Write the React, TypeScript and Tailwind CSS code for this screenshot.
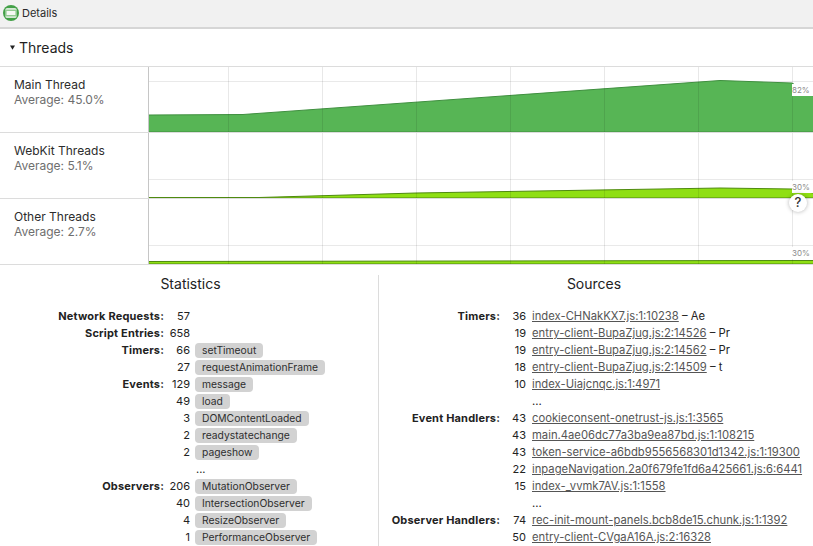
const font = { fontFamily: "Inter, 'Noto Sans', sans-serif" };

const gridX = [79, 173, 267, 361, 455, 549, 643];

function Chart({
  points,
  fill,
  stroke,
  lineY,
  label,
  labelTop,
}: {
  points: string;
  fill: string;
  stroke: string;
  lineY: number;
  label: string;
  labelTop: string;
}) {
  return (
    <div className="relative h-full flex-1 border-l border-[#c6c6c6]">
      <svg width="664" height="65" viewBox="0 0 664 65" className="block">
        <line x1="0" x2="664" y1={lineY} y2={lineY} stroke="#e9e9e9" />
        <polygon points={`0,65 ${points} 664,65`} fill={fill} />
        <polyline points={points} fill="none" stroke={stroke} strokeWidth="1" />
        <line x1="0" x2="664" y1="64.5" y2="64.5" stroke={stroke} strokeOpacity="0.5" />
        {gridX.map((x) => (
          <line key={x} x1={x + 0.5} x2={x + 0.5} y1="0" y2="65" stroke="#000" strokeOpacity="0.09" />
        ))}
      </svg>
      <div className={`absolute right-0 ${labelTop} h-[12px] w-[21px] bg-white text-[8px] leading-[12px] text-[#8a8a8a]`}>
        {label}
      </div>
    </div>
  );
}

function ThreadRow({
  name,
  avg,
  ...chart
}: {
  name: string;
  avg: string;
  points: string;
  fill: string;
  stroke: string;
  lineY: number;
  label: string;
  labelTop: string;
}) {
  return (
    <div className="flex h-[66px] border-b border-[#dcdcdc]">
      <div className="w-[148px] pl-[14px] pt-[10px] text-[12px] leading-[15px]">
        <div className="text-[#2c2c2c]">{name}</div>
        <div className="text-[#6e6e6e]">{avg}</div>
      </div>
      <Chart {...chart} />
    </div>
  );
}

function Chip({ children }: { children: string }) {
  return (
    <span className="inline-block h-[15px] rounded-[4px] bg-[#d2d2d2] px-[7px] text-[10.3px] leading-[15px] text-[#2e2e2e]">
      {children}
    </span>
  );
}

const stats: [string, string, string][] = [
  ["Network Requests:", "57", ""],
  ["Script Entries:", "658", ""],
  ["Timers:", "66", "setTimeout"],
  ["", "27", "requestAnimationFrame"],
  ["Events:", "129", "message"],
  ["", "49", "load"],
  ["", "3", "DOMContentLoaded"],
  ["", "2", "readystatechange"],
  ["", "2", "pageshow"],
  ["", "", "..."],
  ["Observers:", "206", "MutationObserver"],
  ["", "40", "IntersectionObserver"],
  ["", "4", "ResizeObserver"],
  ["", "1", "PerformanceObserver"],
];

const sources: [string, string, string, string][] = [
  ["Timers:", "36", "index-CHNakKX7.js:1:10238", "Ae"],
  ["", "19", "entry-client-BupaZjug.js:2:14526", "Pr"],
  ["", "19", "entry-client-BupaZjug.js:2:14562", "Pr"],
  ["", "18", "entry-client-BupaZjug.js:2:14509", "t"],
  ["", "10", "index-Uiajcnqc.js:1:4971", ""],
  ["", "", "...", ""],
  ["Event Handlers:", "43", "cookieconsent-onetrust-js.js:1:3565", ""],
  ["", "43", "main.4ae06dc77a3ba9ea87bd.js:1:108215", ""],
  ["", "43", "token-service-a6bdb9556568301d1342.js:1:19300", ""],
  ["", "22", "inpageNavigation.2a0f679fe1fd6a425661.js:6:6441", ""],
  ["", "15", "index-_vvmk7AV.js:1:1558", ""],
  ["", "", "...", ""],
  ["Observer Handlers:", "74", "rec-init-mount-panels.bcb8de15.chunk.js:1:1392", ""],
  ["", "50", "entry-client-CVgaA16A.js:2:16328", ""],
];

export default function App() {
  return (
    <div style={font} className="relative h-[546px] w-[813px] overflow-hidden bg-white">
      <div className="flex h-[29px] items-center gap-[3px] border-b-2 border-[#d6d6d6] bg-[#f1f1f1] pl-[3px] pb-[1px]">
        <svg width="16" height="16" viewBox="0 0 16 16">
          <circle cx="8" cy="8" r="8" fill="#43a047" />
          <rect x="2.5" y="3" width="11" height="10" rx="1.5" fill="#f6f8f4" />
          <rect x="2.5" y="5.2" width="11" height="5.6" fill="#7cc07c" />
          <rect x="3.5" y="6" width="9" height="4" fill="#f6f8f4" />
          <path d="M3.5 4.1h9M3.5 11.9h9" stroke="#43a047" strokeWidth="0.9" strokeDasharray="1 1" />
        </svg>
        <span className="text-[11px] text-[#2a2a2a]">Details</span>
      </div>
      <div className="flex h-[38px] items-center gap-[4px] border-b border-[#dcdcdc] pl-[10px]">
        <svg width="5" height="5" viewBox="0 0 5 5">
          <path d="M0 .5h5L2.5 4.8z" fill="#222" />
        </svg>
        <span className="text-[14px] text-[#1f1f1f]">Threads</span>
      </div>
      <ThreadRow
        name="Main Thread"
        avg="Average: 45.0%"
        points="0,48 94,47.5 571,13.5 643,16 664,29"
        fill="#57b555"
        stroke="#3f8f3f"
        lineY={14.5}
        label="82%"
        labelTop="top-[17px]"
      />
      <ThreadRow
        name="WebKit Threads"
        avg="Average: 5.1%"
        points="0,64.5 110,64.5 267,60 571,55 643,56 664,60"
        fill="#8fdf14"
        stroke="#4f8a10"
        lineY={46.5}
        label="30%"
        labelTop="top-[48px]"
      />
      <ThreadRow
        name="Other Threads"
        avg="Average: 2.7%"
        points="0,62.5 643,61.5 664,61.5"
        fill="#8fdf14"
        stroke="#4f8a10"
        lineY={46.5}
        label="30%"
        labelTop="top-[48px]"
      />
      <div className="absolute left-[789px] top-[194px] flex h-[18px] w-[18px] items-center justify-center rounded-full bg-white text-[13px] font-medium text-[#333] shadow-[0_0_4px_rgba(0,0,0,0.3)]">
        ?
      </div>
      <div className="flex">
        <div className="mt-[10px] h-[271px] w-[379px] border-r border-[#dcdcdc]">
          <div className="pl-[3px] text-center text-[14px] leading-[18px] text-[#222]">Statistics</div>
          <div className="mt-[15px] grid grid-cols-[164px_26px_auto] text-[11px] leading-[17px] text-[#222]">
            {stats.map(([label, count, chip], i) => (
              <div key={i} className="col-span-3 grid h-[17px] grid-cols-subgrid items-center">
                <span className="whitespace-nowrap text-right font-bold tracking-[0.18px]">{label}</span>
                <span className="text-right">{count}</span>
                <span className="pl-[5px]">
                  {chip === "..." ? <span className="pl-[1px]">...</span> : chip ? <Chip>{chip}</Chip> : null}
                </span>
              </div>
            ))}
          </div>
        </div>
        <div className="mt-[10px] flex-1">
          <div className="pr-[4px] text-center text-[14px] leading-[18px] text-[#222]">Sources</div>
          <div className="mt-[15px] grid grid-cols-[121px_26px_auto] text-[11.25px] leading-[17px] text-[#222]">
            {sources.map(([label, count, link, fn], i) => (
              <div key={i} className="col-span-3 grid h-[17px] grid-cols-subgrid items-center">
                <span className="whitespace-nowrap text-right text-[11px] font-bold tracking-[0.18px]">{label}</span>
                <span className="text-right text-[11px]">{count}</span>
                <span className="whitespace-nowrap pl-[6px]">
                  {link === "..." ? (
                    "..."
                  ) : (
                    <span className="text-[#555] underline">{link}</span>
                  )}
                  {fn ? ` – ${fn}` : ""}
                </span>
              </div>
            ))}
          </div>
        </div>
      </div>
    </div>
  );
}
